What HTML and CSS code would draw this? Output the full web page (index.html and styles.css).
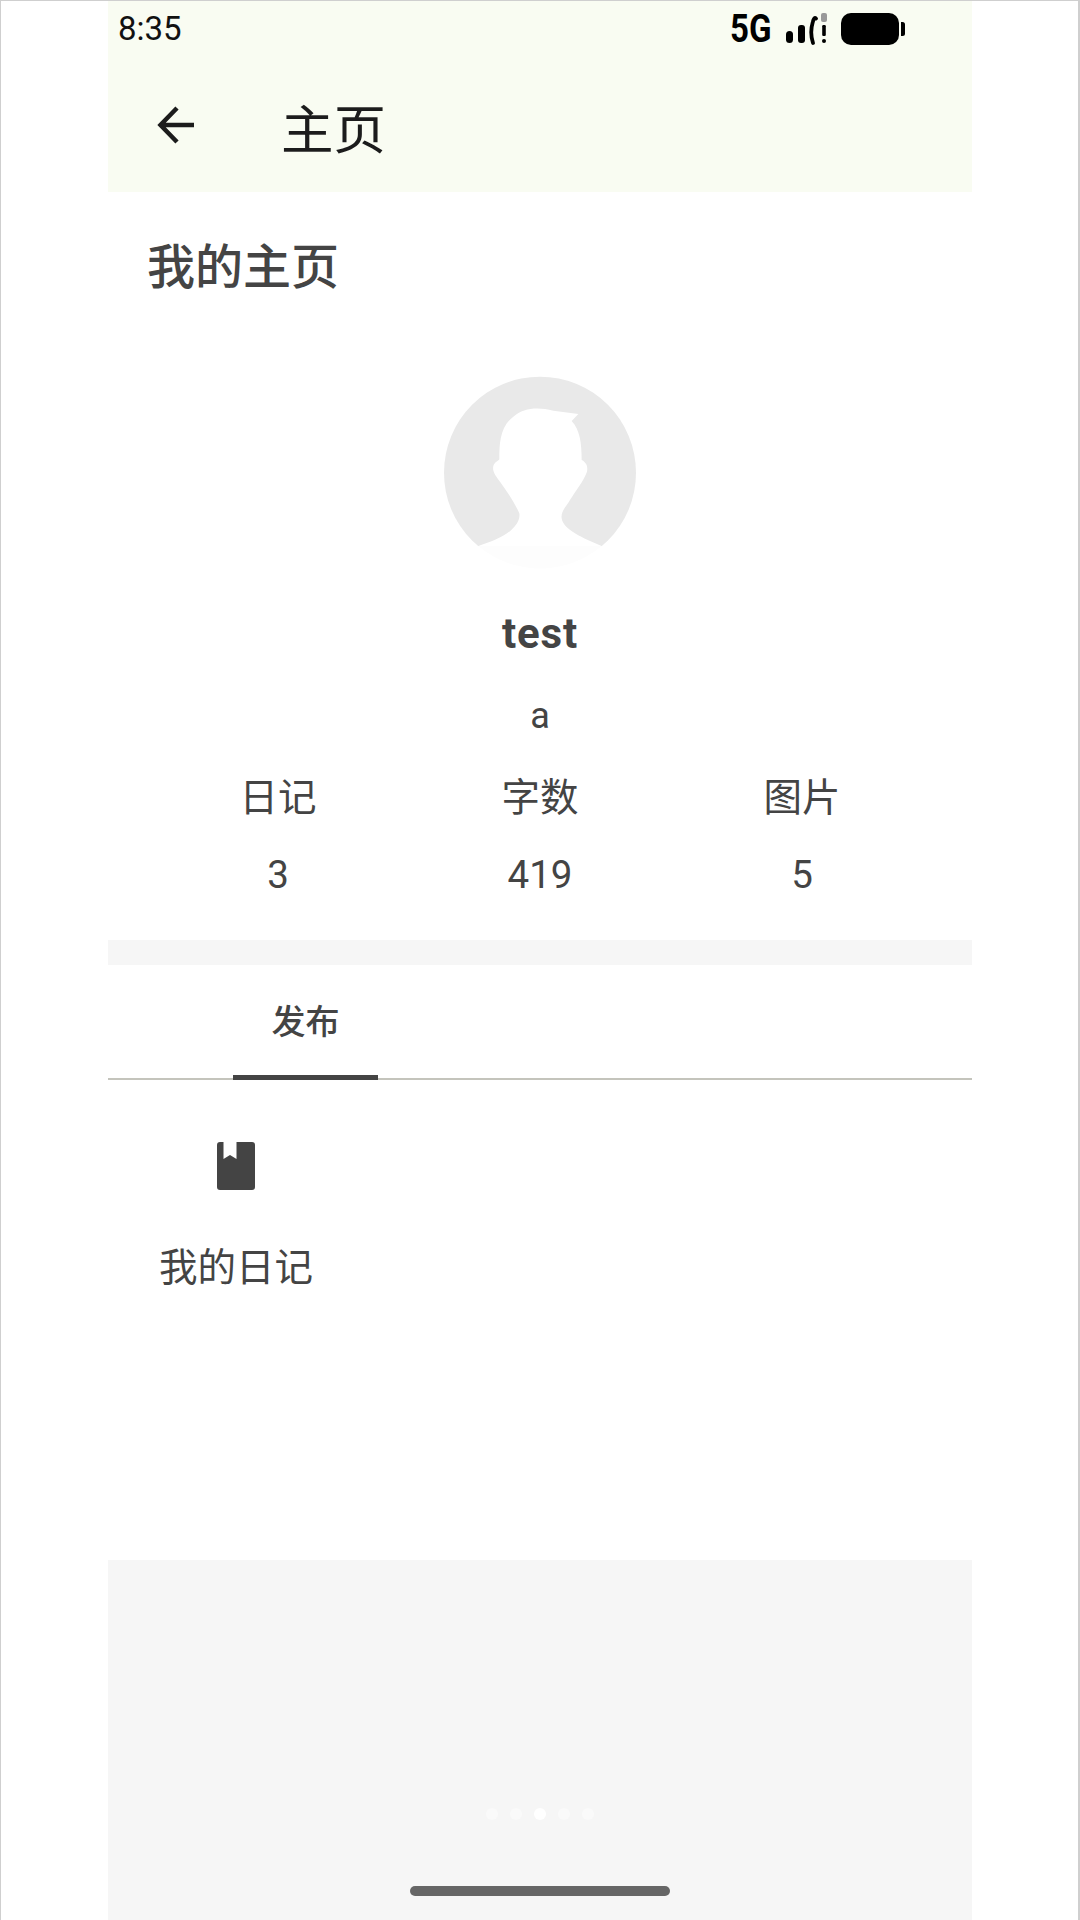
FILE: index.html
```html
<!DOCTYPE html>
<html lang="zh">
<head>
<meta charset="utf-8">
<title>主页</title>
<link rel="stylesheet" href="styles.css">
</head>
<body>
<div class="page">
  <div class="screen">
    <header class="appbar">
      <div class="status">
        <span class="time">8:35</span>
        <div class="status-right">
          <span class="net">5G</span>
          <svg class="signal" width="44" height="32" viewBox="0 0 44 32">
            <rect x="0" y="18" width="7" height="12" rx="3.5" fill="#000"/>
            <rect x="12" y="12" width="7" height="18" rx="3" fill="#000"/>
            <path d="M30 5.500C29 3.500 27.500 6 26.800 9C25 15 25 24 27 30" fill="none" stroke="#000" stroke-width="3.800" stroke-linecap="round"/>
            <rect x="35" y="0" width="6" height="9" rx="2" fill="#999"/>
            <rect x="36.200" y="12" width="3.600" height="11" rx="1.200" fill="#000"/>
            <circle cx="38" cy="28" r="2" fill="#000"/>
          </svg>
          <svg class="battery" width="64" height="32" viewBox="0 0 64 32">
            <rect x="0" y="0" width="58" height="32" rx="10" fill="#000"/>
            <path d="M60 9h1.500a2.500 2.500 0 0 1 2.500 2.500v9a2.500 2.500 0 0 1-2.500 2.500H60z" fill="#000"/>
          </svg>
        </div>
      </div>
      <div class="toolbar">
        <svg class="back" width="38" height="38" viewBox="0 0 38 38">
          <path d="M37 19H3.500M20 2L3.500 19L20 36" fill="none" stroke="#1c1c1c" stroke-width="4.500"/>
        </svg>
        <h1 class="title">主页</h1>
      </div>
    </header>

    <section class="profile">
      <h2 class="heading">我的主页</h2>
      <svg class="avatar" width="240" height="220" viewBox="0 0 720 660">
        <circle cx="360" cy="338" r="288" fill="#e9e9e9"/>
        <path d="M175 558C215 545 262 528 285 498C295 485 300 475 298 460C285 430 262 395 240 365C228 348 216 335 220 318C224 306 234 304 238 298C238 250 240 200 280 170C310 145 350 140 400 152L475 162L455 183C480 210 485 250 485 300C495 305 505 315 501 335C490 365 465 395 450 420C438 440 422 455 425 475C430 510 490 535 545 558L560 660H160Z" fill="#fff"/>
        <path d="M175 558A288 288 0 0 0 545 558Z" fill="#fdfdfd"/>
      </svg>
      <div class="name">test</div>
      <div class="bio">a</div>
      <div class="stats">
        <div class="stat"><span class="stat-label">日记</span><span class="stat-value">3</span></div>
        <div class="stat"><span class="stat-label">字数</span><span class="stat-value">419</span></div>
        <div class="stat"><span class="stat-label">图片</span><span class="stat-value">5</span></div>
      </div>
    </section>

    <div class="band"></div>

    <nav class="tabs">
      <div class="tab">发布</div>
    </nav>

    <section class="content">
      <div class="tile">
        <svg class="book" width="38" height="48" viewBox="0 0 38 48">
          <path d="M3 0H6.500V17L13 13L19.500 17V0H35A3 3 0 0 1 38 3V45A3 3 0 0 1 35 48H3A3 3 0 0 1 0 45V3A3 3 0 0 1 3 0Z" fill="#444"/>
        </svg>
        <span class="tile-label">我的日记</span>
      </div>
    </section>

    <footer class="bottom">
      <div class="dots">
        <span class="dot"></span>
        <span class="dot"></span>
        <span class="dot dot-active"></span>
        <span class="dot"></span>
        <span class="dot"></span>
      </div>
      <div class="home-bar"></div>
    </footer>
  </div>
</div>
</body>
</html>
```

FILE: styles.css
```css
* { box-sizing: border-box; }
html, body { margin: 0; padding: 0; background: #fff; }
body { font-family: Roboto, "Noto Sans CJK SC", sans-serif; color: #444; }

.page {
  height: 1920px;
  overflow: hidden;
  border: solid #cfcfcf;
  border-width: 1px 2px 0 1px;
  display: flex;
  justify-content: center;
}

.screen {
  width: 864px;
  margin: -1px 0 0 1px;
  display: flex;
  flex-direction: column;
  background: #fff;
}

.appbar { height: 192px; background: #f9fcf2; color: #1c1c1c; flex: none; }

.status {
  height: 58px;
  display: flex;
  align-items: center;
  justify-content: space-between;
  padding: 0 67px 0 10px;
}
.time { font-size: 33px; line-height: 56px; color: #111; }
.status-right { display: flex; align-items: center; }
.net {
  font-size: 38px;
  font-weight: 700;
  line-height: 32px;
  color: #000;
  transform: scaleX(.87);
  transform-origin: left center;
  width: 56px;
}
.signal { display: block; }
.battery { display: block; margin-left: 11px; }

.toolbar {
  height: 134px;
  padding: 0 0 0 49px;
  display: flex;
  align-items: center;
}
.back { flex: none; }
.title {
  margin: 12px 0 0 86px;
  font-size: 52.500px;
  font-weight: 400;
  line-height: 60px;
}

.profile {
  height: 748px;
  flex: none;
  display: flex;
  flex-direction: column;
  align-items: center;
  padding-top: 42px;
}
.heading {
  align-self: flex-start;
  margin: 0 0 0 39px;
  font-size: 48px;
  font-weight: 500;
  line-height: 68px;
}
.avatar { margin-top: 58px; display: block; }
.name {
  margin-top: 30px;
  font-size: 42px;
  font-weight: 700;
  line-height: 48px;
  letter-spacing: .8px;
}
.bio { margin-top: 38px; font-size: 36px; line-height: 40px; }

.stats {
  align-self: stretch;
  margin-top: 37px;
  padding: 0 39px;
  display: grid;
  grid-template-columns: repeat(3, 1fr);
}
.stat { display: flex; flex-direction: column; align-items: center; }
.stat-label { font-size: 38.500px; line-height: 50px; }
.stat-value { margin-top: 27px; font-size: 38.500px; line-height: 50px; }

.band { height: 25px; flex: none; background: #f6f6f6; }

.tabs {
  height: 115px;
  flex: none;
  padding-left: 125px;
  display: flex;
  border-bottom: 2px solid #c4c4bc;
}
.tab {
  width: 145px;
  height: 115px;
  border-bottom: 5px solid #444;
  font-size: 34px;
  font-weight: 500;
  line-height: 114px;
  text-align: center;
}

.content { flex: 1; padding: 62px 0 0 50px; }
.tile { width: 156px; display: flex; flex-direction: column; align-items: center; }
.book { display: block; }
.tile-label { margin-top: 50px; font-size: 38.500px; line-height: 56px; white-space: nowrap; }

.bottom {
  height: 360px;
  flex: none;
  background: #f6f6f6;
  display: flex;
  flex-direction: column;
  align-items: center;
  padding-top: 248px;
}
.dots { display: flex; gap: 12px; }
.dot { width: 12px; height: 12px; border-radius: 50%; background: #fafafa; }
.dot-active { background: #fff; }
.home-bar { width: 260px; height: 10px; margin-top: 66px; border-radius: 5px; background: #666; }
```
